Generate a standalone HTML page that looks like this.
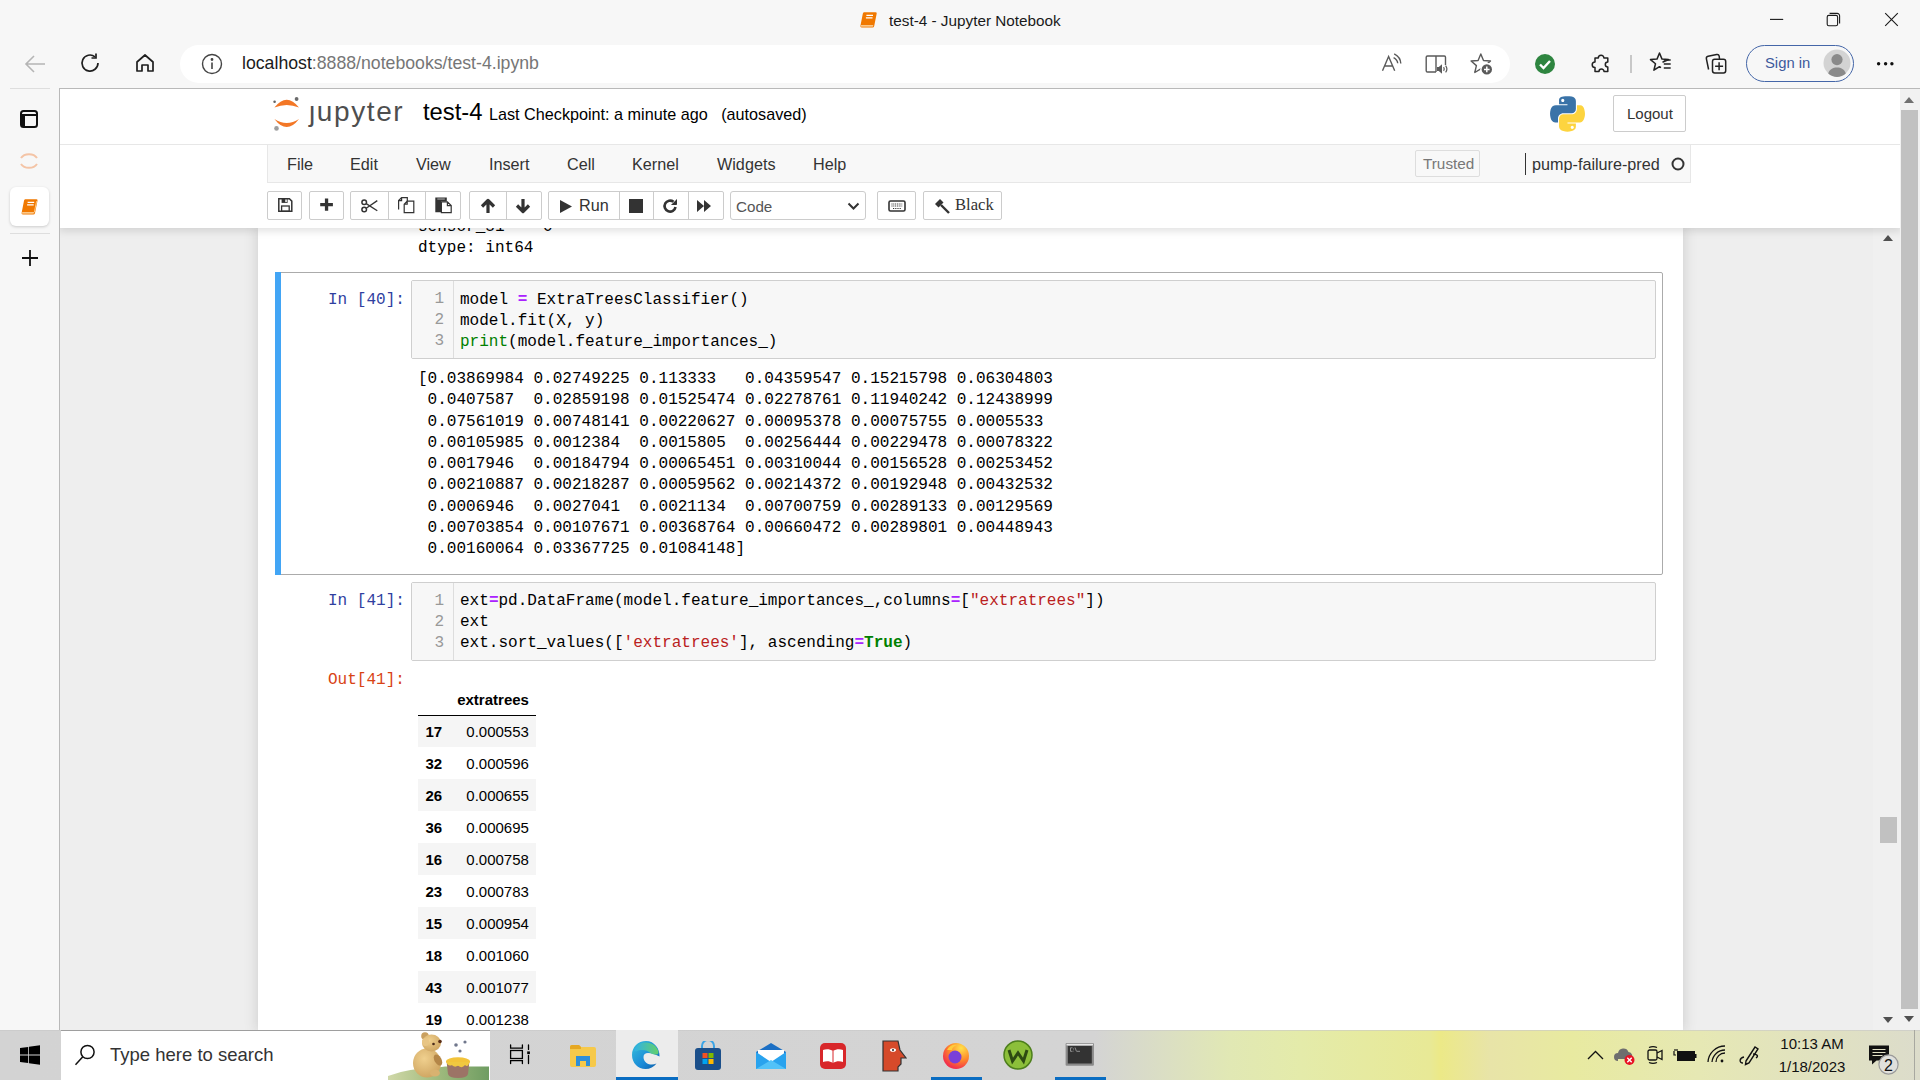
<!DOCTYPE html>
<html><head><meta charset="utf-8">
<style>
*{box-sizing:border-box;margin:0;padding:0}
html,body{width:1920px;height:1080px;overflow:hidden;background:#f7f7f7;font-family:"Liberation Sans",sans-serif;position:relative}
.abs{position:absolute}
svg{display:block}
/* chrome */
#title{left:0;top:0;width:1920px;height:40px;background:#f7f7f7}
#title .t{left:889px;top:12px;font-size:15.3px;color:#1a1a1a;white-space:nowrap}
#addr{left:180px;top:45px;width:1330px;height:38px;background:#fff;border-radius:19px}
#url{left:242px;top:53px;font-size:17.7px;color:#767676;white-space:nowrap}
#url b{font-weight:normal;color:#1b1b1b}
#signin{left:1746px;top:45px;width:108px;height:37px;border:1.6px solid #4466a8;border-radius:19px;background:#f7f7f7}
#signin span{position:absolute;left:18px;top:9px;font-size:14.8px;color:#3d5a9c}
/* sidebar */
#side{left:0;top:88px;width:59px;height:942px;background:#f7f7f7}
/* content */
#content{left:59px;top:88px;width:1841px;height:942px;background:#eeeeee;border-left:1px solid #b9b9b9;border-top:1px solid #b9b9b9;overflow:hidden}
#hdr{left:-1px;top:0;width:1842px;height:139px;background:#fff;box-shadow:0 3px 8px rgba(0,0,0,.12);z-index:5}
#nb{left:198px;top:139px;width:1425px;height:803px;background:#fff;box-shadow:0 0 12px 1px rgba(87,87,87,.2)}
.menubar{left:208px;top:55px;width:1424px;height:39px;background:#f8f8f8;border:1px solid #e7e7e7}
.menu{position:absolute;top:10px;font-size:16.2px;color:#333}
.btn{position:absolute;top:102px;height:29px;border:1px solid #ccc;border-radius:2px;background:#fff}
.div{position:absolute;top:0;width:1px;height:27px;background:#ccc}
.mono{font-family:"Liberation Mono",monospace}
.prompt{position:absolute;font-family:"Liberation Mono",monospace;font-size:16.05px;color:#303f9f;white-space:pre}
.code{position:absolute;font-family:"Liberation Mono",monospace;font-size:16.05px;line-height:21.25px;color:#000;white-space:pre}
.inp{position:absolute;background:#f7f7f7;border:1px solid #cfcfcf;border-radius:2px}
.gut{position:absolute;left:0;top:0;width:42px;height:100%;border-right:1px solid #ddd;background:#f7f7f7}
.ln{position:absolute;right:8px;font-family:"Liberation Mono",monospace;font-size:16.05px;line-height:21.25px;color:#999;text-align:right;white-space:pre}
.op{color:#aa22ff;font-weight:bold}
.bi{color:#008000}
.str{color:#ba2121}
.kw{color:#008000;font-weight:bold}
table.df{position:absolute;margin-top:-1px;border-collapse:collapse;font-size:15px;color:#000}
table.df td,table.df th{height:32px;padding:1px 7.5px 0;text-align:right;white-space:nowrap}
table.df th{font-weight:bold}
table.df tbody tr:nth-child(odd){background:#f5f5f5}
/* taskbar */
#task{left:0;top:1030px;width:1920px;height:50px;background:linear-gradient(90deg,#d3d3d3 0,#d4d4d4 1095px,#e1e8b4 1230px,#e4ebaa 1300px,#e8e996 1430px,#ece987 1440px,#e8e4a8 1490px,#e8eaa0 1570px,#e6e8b4 1700px,#dcdccb 1920px)}
</style></head><body>

<!-- title bar -->
<div id="title" class="abs">
  <svg class="abs" style="left:858px;top:10px" width="22" height="20" viewBox="858 10 22 20"><path d="M864 12.2H875.5a1.2 1.2 0 0 1 1.2 1.4L874.2 26a1.8 1.8 0 0 1-1.8 1.5H861.6a1.2 1.2 0 0 1-1.2-1.4L862.8 13.7a1.8 1.8 0 0 1 1.2-1.5z" fill="#f07800"/><path d="M861 25.3H873.4L872.8 26.6H860.8z" fill="#ffe3b8"/><path d="M866.4 15.3H873M865.9 17.8H872.5" stroke="#fff" stroke-width="1.3"/></svg>
  <div class="abs t">test-4 - Jupyter Notebook</div>
  <svg class="abs" style="left:1760px;top:5px" width="150" height="30" viewBox="1760 5 150 30">
    <path d="M1770 19.4h13.2" stroke="#1a1a1a" stroke-width="1.1"/>
    <rect x="1827.2" y="15.4" width="10.4" height="10.4" rx="1.6" fill="none" stroke="#1a1a1a" stroke-width="1.1"/>
    <path d="M1829.6 13.4h7.6a2.4 2.4 0 0 1 2.4 2.4v7.6" fill="none" stroke="#1a1a1a" stroke-width="1.1"/>
    <path d="M1885.2 13.2L1897.8 25.8M1897.8 13.2L1885.2 25.8" stroke="#1a1a1a" stroke-width="1.1"/>
  </svg>
</div>

<!-- address row -->
<svg class="abs" style="left:24px;top:54px" width="22" height="20" viewBox="0 0 22 20" fill="none" stroke="#b5b5b5" stroke-width="1.6"><path d="M21 10H2M10 2L2 10l8 8"/></svg>
<svg class="abs" style="left:79px;top:52px" width="22" height="22" viewBox="0 0 22 22" fill="none" stroke="#1f1f1f" stroke-width="1.7"><path d="M19 11a8 8 0 1 1-3-6.2"/><path d="M17 1.5v4.5h-4.5"/></svg>
<svg class="abs" style="left:134px;top:52px" width="22" height="22" viewBox="0 0 22 22" fill="none" stroke="#1f1f1f" stroke-width="1.7"><path d="M3 10L11 3l8 7v9h-5v-6H8v6H3z" stroke-linejoin="round"/></svg>
<div id="addr" class="abs"></div>
<svg class="abs" style="left:201px;top:53px" width="22" height="22" viewBox="0 0 22 22" fill="none" stroke="#444" stroke-width="1.4"><circle cx="11" cy="11" r="9.5"/><path d="M11 9.5v6.5" stroke-width="1.6"/><circle cx="11" cy="6.5" r=".7" fill="#444"/></svg>
<div id="url" class="abs"><b>localhost</b>:8888/notebooks/test-4.ipynb</div>
<!-- right icons -->
<svg class="abs" style="left:1378px;top:50px" width="28" height="26" viewBox="1378 50 28 26" fill="none" stroke="#5a5a5a" stroke-width="1.4"><path d="M1382.5 70.7L1388.6 56.5L1394.7 70.7M1384.6 66H1392.6"/><path d="M1394.2 53.8Q1400.6 57 1400.8 63.6M1393.6 57.6Q1397.4 59.6 1397.7 63.2"/></svg>
<svg class="abs" style="left:1422px;top:50px" width="30" height="28" viewBox="1422 50 30 28" fill="none" stroke="#5a5a5a" stroke-width="1.4"><path d="M1436 72H1427.5a1.3 1.3 0 0 1-1.3-1.3V57.3a1.3 1.3 0 0 1 1.3-1.3H1444.3a1.2 1.2 0 0 1 1.2 1.2V65M1436 56V72"/><path d="M1437 67h1.8l3.2-2.8v9.6l-3.2-2.8H1437z" fill="#5a5a5a" stroke="none"/><path d="M1443.6 67.2q1.3 1.8 0 3.6M1445.6 65.6q2.6 3.4 0 6.8" stroke-width="1.2"/></svg>
<svg class="abs" style="left:1468px;top:50px" width="30" height="28" viewBox="1468 50 30 28"><path d="M1480.8 54.0 L1483.5 60.5 L1490.5 61.0 L1485.2 65.6 L1486.8 72.5 L1480.8 68.8 L1474.8 72.5 L1476.4 65.6 L1471.1 61.0 L1478.1 60.5z" fill="none" stroke="#5a5a5a" stroke-width="1.4" stroke-linejoin="round"/><circle cx="1486.8" cy="69.4" r="6.6" fill="#fff"/><circle cx="1486.8" cy="69.4" r="5.2" fill="#5a5a5a"/><path d="M1486.8 66.6v5.6M1484 69.4h5.6" stroke="#fff" stroke-width="1.5"/></svg>
<svg class="abs" style="left:1534px;top:53px" width="22" height="22" viewBox="0 0 22 22"><circle cx="11" cy="11" r="10" fill="#2e8540"/><path d="M6 11.5l3.5 3.5 6.5-7" stroke="#fff" stroke-width="2.4" fill="none"/></svg>
<svg class="abs" style="left:1588px;top:51px" width="24" height="26" viewBox="1588 51 24 26" fill="none" stroke="#222" stroke-width="1.5" stroke-linejoin="round"><path d="M1595 58H1598.3A2.8 2.8 0 0 1 1603.9 58H1607.8V62A2.5 2.5 0 0 0 1607.8 67V71.6H1604A2.5 2.5 0 0 0 1599 71.6H1595V67.6A2.8 2.8 0 0 1 1595 62Z"/></svg>
<div class="abs" style="left:1630px;top:55px;width:1.5px;height:18px;background:#c8c8c8"></div>
<svg class="abs" style="left:1648px;top:51px" width="26" height="26" viewBox="1648 51 26 26" fill="none" stroke="#222" stroke-width="1.5" stroke-linejoin="round"><path d="M1662.5 62.2L1668.5 59.6L1662.0 59.1L1659.5 53.0L1657.0 59.1L1650.5 59.6L1655.5 63.8L1653.9 70.2L1659.5 66.7L1661 67.6"/><path d="M1663.8 59.9h6.9M1663.8 63.9h6.9M1663.8 67.9h6.9"/></svg>
<svg class="abs" style="left:1703px;top:51px" width="26" height="26" viewBox="1703 51 26 26" fill="none" stroke="#222" stroke-width="1.5"><path d="M1708.6 69.5L1706.4 58.8a2.2 2.2 0 0 1 1.7-2.6L1716.6 54.5a2.2 2.2 0 0 1 2.6 1.7L1719.5 59"/><rect x="1712.5" y="59.3" width="13.2" height="13.7" rx="2.2"/><path d="M1719.1 62.2v8M1715.1 66.2h8"/></svg>
<div id="signin" class="abs"><span>Sign in</span>
  <svg class="abs" style="left:76px;top:3px" width="28" height="28" viewBox="0 0 28 28"><circle cx="14" cy="14" r="13.5" fill="#d3d3d3"/><circle cx="14" cy="10.6" r="5.6" fill="#8a8a8a"/><path d="M5.2 24.5C6.5 20.5 10 18.6 14 18.6S21.5 20.5 22.8 24.5A13 13 0 0 1 5.2 24.5z" fill="#8a8a8a"/></svg>
</div>
<svg class="abs" style="left:1875px;top:61px" width="20" height="6" viewBox="0 0 20 6" fill="#111"><circle cx="3.6" cy="2.7" r="1.7"/><circle cx="10.6" cy="2.7" r="1.7"/><circle cx="16.9" cy="2.7" r="1.7"/></svg>


<!-- sidebar -->
<div id="side" class="abs">
  <div class="abs" style="left:10px;top:0;width:40px;height:1px;background:#dedede"></div>
  <svg class="abs" style="left:19px;top:21px" width="20" height="20" viewBox="0 0 20 20" fill="none" stroke="#111" stroke-width="2"><rect x="2" y="2" width="16" height="16" rx="2.5"/><path d="M2 6h16" /><rect x="2" y="6" width="4" height="12" fill="#111" stroke="none"/></svg>
  <svg class="abs" style="left:18px;top:62px" width="22" height="22" viewBox="0 0 22 22" fill="none" stroke="#f4c4a6" stroke-width="2"><path d="M3 8a9 7 0 0 1 16 0M3 14a9 7 0 0 0 16 0"/></svg>
  <div class="abs" style="left:10px;top:99px;width:39px;height:39px;background:#fff;border-radius:6px;box-shadow:0 1px 3px rgba(0,0,0,.18)"></div>
  <svg class="abs" style="left:18px;top:108px" width="22" height="22" viewBox="18 196 22 22"><path d="M25.2 199.3H36.3a1.2 1.2 0 0 1 1.2 1.4L35 213a1.8 1.8 0 0 1-1.8 1.5H22.8a1.2 1.2 0 0 1-1.2-1.4L24 200.8a1.8 1.8 0 0 1 1.2-1.5z" fill="#f07800"/><path d="M22.2 212.3H34.2L33.6 213.6H22z" fill="#ffe3b8"/><path d="M36.6 201.2L34.3 212.3" stroke="#ffc880" stroke-width="1"/><path d="M27.6 202.4H34.2M27.1 204.9H33.7" stroke="#fff" stroke-width="1.3"/></svg>
  <div class="abs" style="left:10px;top:145px;width:40px;height:1px;background:#dedede"></div>
  <svg class="abs" style="left:19px;top:159px" width="22" height="22" viewBox="0 0 22 22" stroke="#111" stroke-width="1.8"><path d="M11 3v16M3 11h16"/></svg>
</div>

<!-- content -->
<div id="content" class="abs">
  <!-- notebook -->
  <div id="nb" class="abs"></div>
  <!-- notebook cells (page coords) -->
  <div class="abs" style="left:-60px;top:-89px;width:1920px;height:1080px">
    <div class="code" style="left:418px;top:217px">sensor_51    0
dtype: int64</div>
    <!-- cell 40 selected -->
    <div class="abs" style="left:275px;top:272px;width:1388px;height:303px;border:1px solid #ababab;border-radius:2px"></div>
    <div class="abs" style="left:275px;top:272px;width:6px;height:303px;background:#42a5f5"></div>
    <div class="prompt" style="left:328px;top:291px">In [40]:</div>
    <div class="inp" style="left:411px;top:280px;width:1245px;height:79px">
      <div class="gut"></div>
      <div class="ln" style="left:0;width:32px;top:8px;right:auto;line-height:21px">1
2
3</div>
    </div>
    <div class="code" style="left:460px;top:290px;line-height:21px">model <span class="op">=</span> ExtraTreesClassifier()
model.fit(X, y)
<span class="bi">print</span>(model.feature_importances_)</div>
    <div class="code" style="left:418px;top:369px">[0.03869984 0.02749225 0.113333   0.04359547 0.15215798 0.06304803
 0.0407587  0.02859198 0.01525474 0.02278761 0.11940242 0.12438999
 0.07561019 0.00748141 0.00220627 0.00095378 0.00075755 0.0005533
 0.00105985 0.0012384  0.0015805  0.00256444 0.00229478 0.00078322
 0.0017946  0.00184794 0.00065451 0.00310044 0.00156528 0.00253452
 0.00210887 0.00218287 0.00059562 0.00214372 0.00192948 0.00432532
 0.0006946  0.0027041  0.0021134  0.00700759 0.00289133 0.00129569
 0.00703854 0.00107671 0.00368764 0.00660472 0.00289801 0.00448943
 0.00160064 0.03367725 0.01084148]</div>
    <!-- cell 41 -->
    <div class="prompt" style="left:328px;top:592px">In [41]:</div>
    <div class="inp" style="left:411px;top:582px;width:1245px;height:79px">
      <div class="gut"></div>
      <div class="ln" style="left:0;width:32px;top:8px;right:auto;line-height:21px">1
2
3</div>
    </div>
    <div class="code" style="left:460px;top:591px;line-height:21px">ext<span class="op">=</span>pd.DataFrame(model.feature_importances_,columns<span class="op">=</span>[<span class="str">"extratrees"</span>])
ext
ext.sort_values([<span class="str">'extratrees'</span>], ascending<span class="op">=</span><span class="kw">True</span>)</div>
    <div class="prompt" style="left:328px;top:671px;color:#d84315">Out[41]:</div>
    <table class="df" style="left:418px;top:684px">
      <thead style="border-bottom:1px solid #000"><tr><th></th><th>extratrees</th></tr></thead>
      <tbody>
      <tr><th>17</th><td>0.000553</td></tr>
      <tr><th>32</th><td>0.000596</td></tr>
      <tr><th>26</th><td>0.000655</td></tr>
      <tr><th>36</th><td>0.000695</td></tr>
      <tr><th>16</th><td>0.000758</td></tr>
      <tr><th>23</th><td>0.000783</td></tr>
      <tr><th>15</th><td>0.000954</td></tr>
      <tr><th>18</th><td>0.001060</td></tr>
      <tr><th>43</th><td>0.001077</td></tr>
      <tr><th>19</th><td>0.001238</td></tr>
      <tr><th>21</th><td>0.001248</td></tr>
      </tbody>
    </table>
    <!-- inner scrollbar -->
    <div class="abs" style="left:1873px;top:228px;width:27px;height:802px;background:#f0f0f0"></div>
    <div class="abs" style="left:1880px;top:817px;width:17px;height:26px;background:#c1c1c1"></div>
    <svg class="abs" style="left:1883px;top:235px" width="10" height="6"><path d="M0 6L5 0l5 6z" fill="#505050"/></svg>
    <svg class="abs" style="left:1883px;top:1017px" width="10" height="6"><path d="M0 0h10L5 6z" fill="#505050"/></svg>
  </div>
  <!-- header -->
  <div id="hdr" class="abs">
    <!-- jupyter logo -->
    <svg class="abs" style="left:213px;top:5px" width="32" height="38" viewBox="0 0 32 38">
      <path d="M2.4 13.6Q14.7 -2 27 13.6Q14.7 8.4 2.4 13.6z" fill="#f37726"/>
      <path d="M2.4 24.9Q14.7 41.1 27 24.9Q14.7 33.1 2.4 24.9z" fill="#f37726"/>
      <circle cx="24.6" cy="5" r="1.9" fill="#6b6b6c"/><circle cx="2.6" cy="7.7" r="1.3" fill="#616262"/><circle cx="4.5" cy="34.4" r="2.3" fill="#9e9e9e"/>
    </svg>
    <div class="abs" style="left:250px;top:7px;font-size:28px;color:#4e4e4e;letter-spacing:1.6px">&#x237;upyter</div>
    <div class="abs" style="left:364px;top:9px;font-size:23.8px;color:#000">test-4</div>
    <div class="abs" style="left:430px;top:16px;font-size:16.2px;color:#000;white-space:pre">Last Checkpoint: a minute ago   (autosaved)</div>
    <!-- python logo -->
    <svg class="abs" style="left:1491px;top:7px" width="35" height="36" viewBox="0 0 111 113">
      <path d="M54.9 0.1C50.3 0.1 46 0.5 42.1 1.2 30.8 3.2 28.7 7.4 28.7 15.1V25.4H55.4V28.8H18.7C10.9 28.8 4.1 33.5 2 42.4-.5 52.5-.6 58.9 2 69.5 3.9 77.4 8.4 83.1 16.2 83.1H25.4V70.9C25.4 62.1 33 54.3 42.1 54.3H68.8C76.2 54.3 82.1 48.2 82.1 40.8V15.1C82.1 7.9 76 2.5 68.8 1.2 64.2.5 59.5.1 54.9.1ZM40.5 8.4C43.3 8.4 45.5 10.7 45.5 13.5 45.5 16.3 43.3 18.6 40.5 18.6 37.8 18.6 35.5 16.3 35.5 13.5 35.5 10.7 37.8 8.4 40.5 8.4Z" fill="#3a73a8"/>
      <path d="M85.5 28.8V40.7C85.5 49.9 77.7 57.6 68.8 57.6H42.1C34.8 57.6 28.7 63.9 28.7 71.2V96.8C28.7 104.1 35 108.4 42.1 110.5 50.6 113 58.8 113.4 68.8 110.5 75.5 108.6 82.1 104.7 82.1 96.8V86.5H55.4V83.1H95.5C103.3 83.1 106.2 77.7 108.9 69.5 111.7 61.1 111.6 53 108.9 42.4 107 34.8 103.3 28.8 95.5 28.8ZM70.5 93.6C73.3 93.6 75.5 95.9 75.5 98.7 75.5 101.6 73.3 103.9 70.5 103.9 67.8 103.9 65.5 101.6 65.5 98.7 65.5 95.9 67.8 93.6 70.5 93.6Z" fill="#fdd43f"/>
    </svg>
    <div class="abs" style="left:1554px;top:6px;width:73px;height:37px;border:1px solid #ccc;border-radius:2px;font-size:15px;color:#333;padding:9px 0 0 13px">Logout</div>
    <div class="abs" style="left:0;top:55px;width:1842px;height:1px;background:#e7e7e7"></div>
    <!-- menubar -->
    <div class="abs menubar">
      <span class="menu" style="left:19px">File</span>
      <span class="menu" style="left:82px">Edit</span>
      <span class="menu" style="left:148px">View</span>
      <span class="menu" style="left:221px">Insert</span>
      <span class="menu" style="left:299px">Cell</span>
      <span class="menu" style="left:364px">Kernel</span>
      <span class="menu" style="left:449px">Widgets</span>
      <span class="menu" style="left:545px">Help</span>
      <div class="abs" style="left:1147px;top:5px;width:65px;height:27px;border:1px solid #ddd;border-radius:2px;background:#f8f8f8;font-size:15.3px;color:#777;padding:4px 0 0 7px">Trusted</div>
      <div class="abs" style="left:1257px;top:8px;width:1px;height:22px;background:#333"></div>
      <span class="menu" style="left:1264px;color:#333">pump-failure-pred</span>
      <svg class="abs" style="left:1403px;top:12px" width="14" height="14" viewBox="0 0 14 14"><circle cx="7" cy="7" r="5.5" fill="none" stroke="#333" stroke-width="2"/></svg>
    </div>
    <!-- toolbar -->
    <div class="btn" style="left:208px;width:35px"></div>
    <div class="btn" style="left:250px;width:35px"></div>
    <div class="btn" style="left:291px;width:111px"><div class="div" style="left:37px"></div><div class="div" style="left:74px"></div></div>
    <svg class="abs" style="left:201px;top:101px;z-index:2" width="200" height="28" viewBox="260 190 200 28">
      <g fill="none" stroke="#333">
        <path d="M278.8 198.7H289.4L291.8 201.1V211.3H278.8Z" stroke-width="1.5"/>
        <rect x="281.6" y="206" width="7.6" height="5.3" stroke-width="1.3"/>
        <circle cx="364.2" cy="202.3" r="2.3" stroke-width="1.5"/><circle cx="364.2" cy="209.5" r="2.3" stroke-width="1.5"/>
        <path d="M366.2 203.6L377.3 210.8M366.2 208.2L377.3 200.6" stroke-width="1.3"/>
        <path d="M398.6 209.4V200.6L401.6 197.6H407.3V201M398.6 200.6H401.6V197.6" stroke-width="1.2"/>
        <path d="M404.2 212.6V204.2L407.2 201.2H413.8V212.6ZM404.2 204.2H407.2V201.2" stroke-width="1.2" fill="#fff"/>
      </g>
      <path d="M281.6 198.7H287.6V202.9H281.6Z" fill="#333"/><rect x="285.3" y="199.5" width="1.5" height="2.6" fill="#fff"/>
      <path d="M320.2 203H332.9V206.3H320.2ZM324.9 198.4H328.2V210.8H324.9Z" fill="#333"/>
      <path d="M435.3 197.6H446.8V201.4H441V212.2H435.3Z" fill="#333"/><rect x="437.3" y="198.4" width="7.5" height="1.3" fill="#999"/>
      <path d="M441.4 212.6V201.8H447.4L451.2 205.6V212.6ZM447.4 201.8V205.6H451.2" fill="#fff" stroke="#333" stroke-width="1.2"/>
    </svg>
    <div class="btn" style="left:410px;width:73px">
      <svg class="abs" style="left:10px;top:6px" width="16" height="16" viewBox="0 0 16 16"><path d="M8 15V3M2 8.5L8 2.5l6 6" stroke="#333" stroke-width="3.2" fill="none" stroke-linejoin="round"/></svg>
      <div class="div" style="left:36px"></div>
      <svg class="abs" style="left:45px;top:6px" width="16" height="16" viewBox="0 0 16 16"><path d="M8 1v12M2 7.5l6 6 6-6" stroke="#333" stroke-width="3.2" fill="none" stroke-linejoin="round"/></svg>
    </div>
    <div class="btn" style="left:489px;width:176px">
      <svg class="abs" style="left:10px;top:7px" width="14" height="15" viewBox="0 0 14 15"><path d="M1 1l12 6.5L1 14z" fill="#333"/></svg>
      <span class="abs" style="left:30px;top:4px;font-size:16.2px;color:#333">Run</span>
      <div class="div" style="left:70px"></div>
      <svg class="abs" style="left:80px;top:7px" width="14" height="14"><rect width="14" height="14" fill="#333"/></svg>
      <div class="div" style="left:104px"></div>
      <svg class="abs" style="left:113px;top:6px" width="16" height="16" viewBox="0 0 16 16" fill="none" stroke="#333" stroke-width="2.6"><path d="M13.5 9a5.5 5.5 0 1 1-2-5.2"/><path d="M14.5 1.5v5h-5" fill="#333" stroke-width="1"/></svg>
      <div class="div" style="left:139px"></div>
      <svg class="abs" style="left:147px;top:7px" width="16" height="14" viewBox="0 0 16 14"><path d="M1 1l7 6-7 6zM8 1l7 6-7 6z" fill="#333"/></svg>
    </div>
    <div class="btn" style="left:671px;width:136px;border-radius:3px">
      <span class="abs" style="left:5px;top:6px;font-size:15.2px;color:#555">Code</span>
      <svg class="abs" style="left:116px;top:10px" width="13" height="9" viewBox="0 0 13 9"><path d="M1.5 1.5l5 5 5-5" fill="none" stroke="#333" stroke-width="2"/></svg>
    </div>
    <div class="btn" style="left:818px;width:39px"><svg class="abs" style="left:10px;top:8px" width="18" height="12" viewBox="0 0 18 12"><rect x="1" y="1" width="16" height="10" rx="1.5" fill="none" stroke="#333" stroke-width="1.6"/><path d="M3.5 4h11M3.5 6h11M5 8.5h8" stroke="#333" stroke-width="1.2" stroke-dasharray="1 .8"/></svg></div>
    <div class="btn" style="left:864px;width:79px">
      <svg class="abs" style="left:10px;top:6px" width="17" height="16" viewBox="0 0 17 16"><path d="M1 6l5-5 3.5 3.5-5 5z" fill="#333"/><path d="M7 7l8 8" stroke="#333" stroke-width="2.4"/></svg>
      <span class="abs" style="left:31px;top:3px;font-family:'Liberation Serif',serif;font-size:16.6px;color:#333">Black</span>
    </div>
  </div>
</div>

<!-- outer scrollbar -->
<div class="abs" style="left:1900px;top:88px;width:20px;height:942px;background:#f1f1f1;border-top:1px solid #b9b9b9"></div>
<div class="abs" style="left:1901px;top:110px;width:17px;height:899px;background:#c1c1c1"></div>
<svg class="abs" style="left:1904px;top:97px" width="10" height="6"><path d="M0 6L5 0l5 6z" fill="#707070"/></svg>
<svg class="abs" style="left:1904px;top:1016px" width="10" height="6"><path d="M0 0h10L5 6z" fill="#505050"/></svg>

<!-- taskbar -->
<div id="task" class="abs">
  <div class="abs" style="left:0;top:0;width:1920px;height:1px;background:#c8c8c8;opacity:.6"></div>
  <svg class="abs" style="left:20px;top:15px" width="20" height="20" viewBox="0 0 20 20" fill="#000"><path d="M0 3l8.2-1.1v7.6H0zM9 1.8L20 .3v9.2H9zM0 10.5h8.2v7.6L0 17zM9 10.5h11v9.2L9 18.2z"/></svg>
  <div class="abs" style="left:61px;top:0;width:429px;height:50px;background:#fff;border-top:1px solid #9e9e9e"></div>
  <svg class="abs" style="left:74px;top:14px" width="24" height="24" viewBox="0 0 24 24" fill="none" stroke="#111" stroke-width="1.5"><circle cx="13.5" cy="8" r="6.6"/><path d="M8.8 12.8L1.5 20.8"/></svg>
  <div class="abs" style="left:110px;top:14px;font-size:18.5px;color:#333;white-space:nowrap">Type here to search</div>
  <!-- bear art -->
  <svg class="abs" style="left:388px;top:2px" width="102" height="48" viewBox="0 0 102 48">
    <defs><linearGradient id="hill" x1="0" x2="1"><stop offset="0" stop-color="#d0d8a8"/><stop offset=".45" stop-color="#a4bd80"/><stop offset="1" stop-color="#6f9d62"/></linearGradient>
    <radialGradient id="bear" cx=".4" cy=".35" r=".8"><stop offset="0" stop-color="#f0d08e"/><stop offset="1" stop-color="#c99e5a"/></radialGradient></defs>
    <path d="M0 48V44Q20 36 50 35.5L57 34.5H101V48z" fill="url(#hill)"/>
    <ellipse cx="39" cy="31" rx="14" ry="14.5" fill="url(#bear)"/>
    <circle cx="37" cy="4" r="3.8" fill="#c9a060"/>
    <ellipse cx="43.5" cy="11" rx="9.5" ry="8.5" fill="url(#bear)"/>
    <ellipse cx="37.5" cy="10" rx="3.5" ry="4" fill="#e8c585"/>
    <circle cx="52" cy="9.5" r="1.8" fill="#5a2e18"/>
    <circle cx="45.5" cy="12" r="1.3" fill="#4a2a1a"/>
    <ellipse cx="50" cy="28" rx="3.5" ry="6" fill="#b48648" transform="rotate(-30 50 28)"/>
    <ellipse cx="47" cy="41" rx="5" ry="3.5" fill="#d8b270"/>
    <path d="M58.5 29H81.5L80 42Q79 46 70 46Q61 46 60 42z" fill="#9c7466"/>
    <ellipse cx="70" cy="29.5" rx="12" ry="4.2" fill="#f2c33a"/>
    <path d="M58.5 30Q60 35 64 33Q67 36 70 33.5Q74 37 77 33Q80 36 81.5 30z" fill="#f0c840"/>
    <circle cx="68" cy="13" r="1.8" fill="#70778c"/><circle cx="77" cy="10" r="1.6" fill="#70778c"/><circle cx="72" cy="19" r="1.6" fill="#70778c"/>
  </svg>
  <!-- task view -->
  <svg class="abs" style="left:505px;top:10px" width="30" height="30" viewBox="505 1040 30 30" fill="none" stroke="#000" stroke-width="1.3" stroke-linecap="round"><path d="M510.6 1045V1048.1H522.4V1045M510.6 1063.5V1060.6H522.4V1063.5M528.5 1045V1049.4M528.5 1055.4V1063.5"/><rect x="510.6" y="1050.5" width="11.8" height="8" stroke-linecap="butt"/><rect x="527.2" y="1051.4" width="2.7" height="2.7" fill="#000" stroke="none"/></svg>
  <!-- explorer -->
  <svg class="abs" style="left:569px;top:14px" width="28" height="24" viewBox="0 0 28 24"><path d="M1 3a2 2 0 0 1 2-2h7l2 2h13a2 2 0 0 1 2 2v16a2 2 0 0 1-2 2H3a2 2 0 0 1-2-2z" fill="#f6c94a"/><path d="M1 3a2 2 0 0 1 2-2h7l2 2v2H1z" fill="#e6a823"/><path d="M7 22V12h14v10h-4v-5h-6v5z" fill="#2f8fd8"/></svg>
  <!-- edge active -->
  <div class="abs" style="left:616px;top:0;width:62px;height:50px;background:#ececec"></div>
  <div class="abs" style="left:616px;top:47px;width:62px;height:3px;background:#0a6dc2"></div>
  <svg class="abs" style="left:631px;top:10px" width="30" height="30" viewBox="0 0 30 30">
    <defs><linearGradient id="eg" x1="0" y1="0" x2="1" y2="1"><stop offset="0" stop-color="#36c1d9"/><stop offset=".6" stop-color="#1a8ad8"/><stop offset="1" stop-color="#0c59a4"/></linearGradient><linearGradient id="eg2" x1="0" x2="1"><stop offset="0" stop-color="#2fb1e8"/><stop offset="1" stop-color="#63d06b"/></linearGradient></defs>
    <path d="M15 1C7 1 1 7 1 15s6 14 13.5 14c4.5 0 8.5-2 11-5.5-2 1-4 1.3-6 1-4-.5-7-3.5-7-7.5 0-2.5 1.8-4 4.5-4 4.5 0 8 2 11.5 3.5C29 9 23.5 1 15 1z" fill="url(#eg)"/>
    <path d="M3 11C5 5 10 2.5 15 2.5c6 0 11 3.5 12.5 9.5 0 2-1 2.5-3 2.5-1.5 0-3-.5-4.5-1-3-3-7-4-10.5-3.5C7 10.5 5 12 3 11z" fill="url(#eg2)"/>
  </svg>
  <!-- store -->
  <svg class="abs" style="left:693px;top:11px" width="30" height="30" viewBox="0 0 30 30"><path d="M9 7V5a6 6 0 0 1 12 0v2" fill="none" stroke="#3aa4e6" stroke-width="2"/><rect x="2" y="7" width="26" height="22" rx="3" fill="#1b4f8a"/><rect x="9.5" y="12" width="5" height="5" fill="#f25022"/><rect x="15.5" y="12" width="5" height="5" fill="#7fba00"/><rect x="9.5" y="18" width="5" height="5" fill="#00a4ef"/><rect x="15.5" y="18" width="5" height="5" fill="#ffb900"/></svg>
  <!-- mail -->
  <svg class="abs" style="left:755px;top:12px" width="32" height="28" viewBox="0 0 32 28"><path d="M1 10L16 1l15 9v17H1z" fill="#1b6fc4"/><path d="M3 8h26v10L16 24 3 18z" fill="#fff"/><path d="M1 10l15 10 15-10v17H1z" fill="#29a3ee"/><path d="M1 27l15-9 15 9z" fill="#52c2f8"/></svg>
  <!-- book reader -->
  <svg class="abs" style="left:819px;top:12px" width="28" height="28" viewBox="0 0 28 28"><rect x="1" y="1" width="26" height="26" rx="5" fill="#d8272a"/><path d="M4 8c3-1 7-1 10 1 3-2 7-2 10-1v12c-3-1-7-1-10 1-3-2-7-2-10-1z" fill="#fff"/><path d="M14 9v12" stroke="#d8272a" stroke-width="1"/></svg>
  <!-- red face -->
  <svg class="abs" style="left:881px;top:10px" width="26" height="32" viewBox="0 0 26 32"><path d="M2 1h15l2 9 6 8h-5v6l-3 3v4H2z" fill="#d64a2a" stroke="#333" stroke-width="1.2"/><ellipse cx="12" cy="10" rx="3" ry="1.8" fill="#fff"/><circle cx="12" cy="10" r="1" fill="#222"/></svg>
  <!-- firefox -->
  <svg class="abs" style="left:941px;top:10px" width="30" height="30" viewBox="0 0 30 30"><defs><radialGradient id="ff" cx=".7" cy=".2" r="1"><stop offset="0" stop-color="#ffe14a"/><stop offset=".45" stop-color="#ff8a2a"/><stop offset=".8" stop-color="#f2334c"/></radialGradient></defs><circle cx="15" cy="16" r="13" fill="url(#ff)"/><circle cx="14" cy="17" r="6.5" fill="#7a3fd8"/><path d="M6 10c2-4 6-6 10-5-3 1-5 3-5 5z" fill="#ffcb3a"/></svg>
  <div class="abs" style="left:931px;top:47px;width:51px;height:3px;background:#0a6dc2"></div>
  <!-- W -->
  <svg class="abs" style="left:1003px;top:10px" width="30" height="30" viewBox="0 0 30 30"><circle cx="15" cy="15" r="14" fill="#8cbf3a" stroke="#4d7f1c" stroke-width="1.5"/><path d="M6 10l3.5 11 5.5-8 5.5 8L24 10" fill="none" stroke="#2d4a12" stroke-width="3"/></svg>
  <!-- terminal -->
  <svg class="abs" style="left:1064px;top:12px" width="32" height="26" viewBox="1064 1042 32 26"><rect x="1065.6" y="1043.1" width="28.3" height="22.6" rx="1" fill="#8a8a8a"/><rect x="1066.5" y="1043.8" width="26.5" height="1.6" fill="#e8e8e8"/><rect x="1067.8" y="1046" width="24" height="17.5" fill="#333"/><path d="M1072.5 1047.8h-2v3.5h2M1073.5 1048.5v1M1073.5 1050.8v.5M1075 1047.5l1.5 4M1077 1051.3h3" stroke="#aaa" stroke-width=".8" fill="none"/></svg>
  <div class="abs" style="left:1055px;top:47px;width:51px;height:3px;background:#0a6dc2"></div>
  <!-- tray -->
  <svg class="abs" style="left:1586px;top:1020px;display:none"></svg>
  <svg class="abs" style="left:1587px;top:20px" width="17" height="10" viewBox="0 0 17 10" fill="none" stroke="#111" stroke-width="1.3"><path d="M1 9l7.5-7.5L16 9"/></svg>
  <svg class="abs" style="left:1614px;top:16px" width="22" height="20" viewBox="0 0 22 20"><path d="M4 15a4 4 0 0 1 0-8 5.5 5.5 0 0 1 10.5-1A4 4 0 0 1 17 13H4z" fill="#6e6e6e"/><circle cx="15.5" cy="14" r="5" fill="#e81123"/><path d="M13.3 11.8l4.4 4.4M17.7 11.8l-4.4 4.4" stroke="#fff" stroke-width="1.4"/></svg>
  <svg class="abs" style="left:1646px;top:15px" width="18" height="20" viewBox="0 0 18 20" fill="none" stroke="#111" stroke-width="1.3"><rect x="2" y="5" width="9" height="10" rx="1.5"/><path d="M11 8l5-2.5v9L11 12"/><path d="M3 2.5a6 3 0 0 1 8 0M3 17.5a6 3 0 0 0 8 0"/></svg>
  <svg class="abs" style="left:1673px;top:18px" width="24" height="14" viewBox="0 0 24 14"><path d="M1 3v4h2M2 1v2M4 1v2" stroke="#111" stroke-width="1.2" fill="none"/><rect x="4" y="3" width="18" height="10" fill="#111"/><rect x="22" y="6" width="1.5" height="4" fill="#111"/></svg>
  <svg class="abs" style="left:1706px;top:14px" width="22" height="20" viewBox="0 0 22 20" fill="none" stroke="#111" stroke-width="1.3"><path d="M2 18A17 17 0 0 1 19 2M6 18A13 13 0 0 1 19 6M10 18a9 9 0 0 1 9-9"/><circle cx="16" cy="17" r="1.4" fill="#111" stroke="none"/></svg>
  <svg class="abs" style="left:1737px;top:14px" width="24" height="22" viewBox="0 0 24 22" fill="none" stroke="#111" stroke-width="1.4"><path d="M9 17L18 3l3 2-9 14-3.5 1.5z"/><path d="M16 10c4 0 6 2 3 4M7 13C2 14 2 19 6 19"/></svg>
  <div class="abs" style="left:1772px;top:3px;width:80px;text-align:center;font-size:15px;color:#111;line-height:22.5px">10:13 AM<br>1/18/2023</div>
  <svg class="abs" style="left:1867px;top:14px" width="34" height="34" viewBox="0 0 34 34"><path d="M2 1.5h20v15H9.5l-4.5 4v-4H2z" fill="#111"/><path d="M5.5 5.5h13M5.5 8.5h13M5.5 11.5h10" stroke="#e3e1c6" stroke-width="1.1"/><circle cx="21.5" cy="20.5" r="9.6" fill="#e0e0dc" stroke="#9a9a9a" stroke-width="1.2"/><text x="21.5" y="26.5" font-size="16" text-anchor="middle" fill="#111" font-family="Liberation Sans">2</text></svg>
  <div class="abs" style="left:1914px;top:0;width:1px;height:50px;background:#a8a8a0"></div>
</div>
</body></html>
